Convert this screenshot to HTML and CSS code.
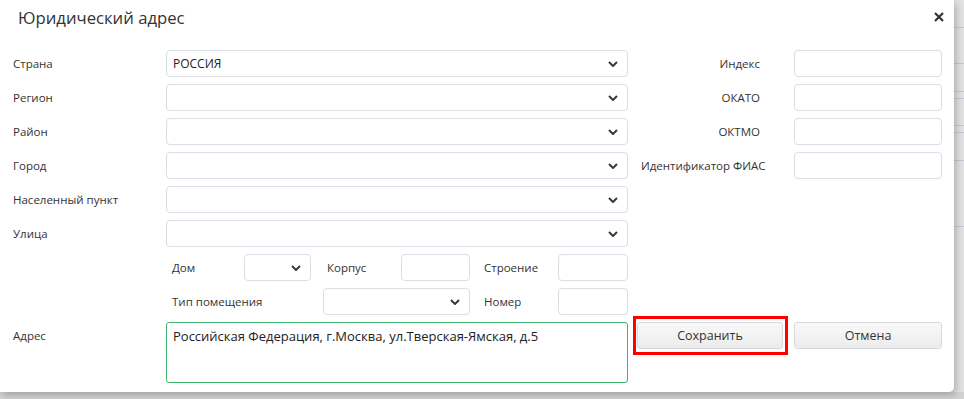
FILE: index.html
```html
<!DOCTYPE html>
<html lang="ru">
<head>
    <meta charset="UTF-8">
    <meta name="viewport" content="width=device-width, initial-scale=1.0">
    <title>Юридический адрес</title>
    <link rel="stylesheet" href="styles.css">
</head>
<body>
    <!-- Page behind the dialog -->
    <div class="backdrop">
        <div class="bg-row r1"></div>
        <div class="bg-row r2"></div>
        <div class="bg-row r3"></div>
        <div class="bg-row r4"></div>
        <div class="bg-row r5"></div>
        <div class="bg-row r6"></div>
        <div class="bg-row r7"></div>
        <div class="bg-row r8"></div>
    </div>

    <!-- Dialog -->
    <div class="modal">
        <div class="modal-header">
            <h2>Юридический адрес</h2>
            <svg class="close" viewBox="0 0 10 10"><path d="M1,1 L9,9 M9,1 L1,9"/></svg>
        </div>

        <div class="modal-body">
            <div class="left-col">
                <div class="form-row">
                    <label>Страна</label>
                    <div class="select"><span>РОССИЯ</span><svg viewBox="0 0 10 6"><polyline points="1,1 5,5 9,1"/></svg></div>
                </div>
                <div class="form-row">
                    <label>Регион</label>
                    <div class="select"><span></span><svg viewBox="0 0 10 6"><polyline points="1,1 5,5 9,1"/></svg></div>
                </div>
                <div class="form-row">
                    <label>Район</label>
                    <div class="select"><span></span><svg viewBox="0 0 10 6"><polyline points="1,1 5,5 9,1"/></svg></div>
                </div>
                <div class="form-row">
                    <label>Город</label>
                    <div class="select"><span></span><svg viewBox="0 0 10 6"><polyline points="1,1 5,5 9,1"/></svg></div>
                </div>
                <div class="form-row">
                    <label>Населенный пункт</label>
                    <div class="select"><span></span><svg viewBox="0 0 10 6"><polyline points="1,1 5,5 9,1"/></svg></div>
                </div>
                <div class="form-row">
                    <label>Улица</label>
                    <div class="select"><span></span><svg viewBox="0 0 10 6"><polyline points="1,1 5,5 9,1"/></svg></div>
                </div>

                <div class="sub-row">
                    <label class="w-dom">Дом</label>
                    <div class="select w-67"><span></span><svg viewBox="0 0 10 6"><polyline points="1,1 5,5 9,1"/></svg></div>
                    <label class="w-korpus">Корпус</label>
                    <div class="input w-69"></div>
                    <label class="w-str">Строение</label>
                    <div class="input w-70"></div>
                </div>
                <div class="sub-row">
                    <label class="w-type">Тип помещения</label>
                    <div class="select w-147"><span></span><svg viewBox="0 0 10 6"><polyline points="1,1 5,5 9,1"/></svg></div>
                    <label class="w-str">Номер</label>
                    <div class="input w-70"></div>
                </div>
            </div>

            <div class="right-col">
                <div class="form-row">
                    <label>Индекс</label>
                    <div class="input"></div>
                </div>
                <div class="form-row">
                    <label>ОКАТО</label>
                    <div class="input"></div>
                </div>
                <div class="form-row">
                    <label>ОКТМО</label>
                    <div class="input"></div>
                </div>
                <div class="form-row">
                    <label>Идентификатор ФИАС</label>
                    <div class="input"></div>
                </div>
            </div>
        </div>

        <div class="modal-footer">
            <div class="address-row">
                <label>Адрес</label>
                <div class="textarea">Российская Федерация, г.Москва, ул.Тверская-Ямская, д.5</div>
            </div>
            <div class="buttons">
                <button class="btn highlighted">Сохранить</button>
                <button class="btn">Отмена</button>
            </div>
        </div>
    </div>
</body>
</html>
```

FILE: styles.css
```css
/* Reset */
* {
    margin: 0;
    padding: 0;
    box-sizing: border-box;
}

body {
    font-family: "Open Sans", "Noto Sans", Arial, sans-serif;
    background-color: #d3d4d6;
    color: #333;
    width: 964px;
    height: 399px;
    overflow: hidden;
    position: relative;
}

/* Background page */
.backdrop {
    height: 392px;
    background-color: #e3e3e4;
    padding-top: 27px;
}

.bg-row {
    border-top: 1px solid #c7cad6;
}

.r1 { height: 36px; }
.r2 { height: 28px; }
.r3 { height: 7px; }
.r4 { height: 27px; }
.r5 { height: 7px; }
.r6 { height: 28px; }
.r7 { height: 66px; }
.r8 { height: 1px; }

/* Dialog */
.modal {
    position: absolute;
    top: 0;
    left: 0;
    width: 954px;
    height: 392px;
    background-color: #fff;
    border-radius: 0 0 5px 0;
    box-shadow: 2px 3px 8px rgba(0, 0, 0, 0.25);
    padding: 0 12px 0 13px;
}

.modal-header {
    height: 38px;
    display: flex;
    justify-content: space-between;
    align-items: center;
    padding-left: 5px;
}

.modal-header h2 {
    font-size: 16.7px;
    font-weight: 400;
    color: #333;
    margin-top: -3px;
}

.close {
    width: 10px;
    height: 10px;
    fill: none;
    stroke: #333;
    stroke-width: 2.2;
    margin-right: -2px;
    margin-top: -4px;
}

.modal-body {
    display: flex;
    margin-top: 12px;
}

.left-col {
    width: 615px;
    display: flex;
    flex-direction: column;
    gap: 7px;
}

.right-col {
    width: 305px;
    margin-left: 9px;
    display: flex;
    flex-direction: column;
    gap: 7px;
}

.form-row {
    display: flex;
    align-items: center;
    height: 27px;
}

label {
    font-size: 11.5px;
    color: #333;
    white-space: nowrap;
}

.left-col .form-row label {
    width: 153px;
}

.right-col .form-row label {
    width: 119px;
    text-align: right;
    margin-left: 4px;
    margin-right: 34px;
}

.select,
.input {
    height: 27px;
    border: 1px solid #dcdce6;
    border-radius: 4px;
    background-color: #fff;
}

.select {
    flex: 1;
    display: flex;
    align-items: center;
    justify-content: space-between;
    padding: 0 9px 0 6px;
    font-size: 12px;
    color: #222;
}

.select svg {
    width: 10px;
    height: 6px;
    fill: none;
    stroke: #3a3a3a;
    stroke-width: 2;
}

.input {
    flex: 1;
}

/* House / building rows */
.sub-row {
    display: flex;
    align-items: center;
    height: 27px;
    padding-left: 159px;
}

.sub-row .select,
.sub-row .input {
    flex: none;
}

.w-dom { width: 72px; }
.w-korpus { width: 74px; margin-left: 16px; }
.w-str { width: 74px; margin-left: 14px; }
.w-type { width: 151px; }
.w-67 { width: 67px; }
.w-69 { width: 69px; }
.w-70 { width: 70px; }
.w-147 { width: 147px; }

/* Address and buttons */
.modal-footer {
    display: flex;
    margin-top: 7px;
}

.address-row {
    width: 615px;
    display: flex;
    align-items: flex-start;
}

.address-row label {
    width: 153px;
    margin-top: 6px;
}

.textarea {
    flex: 1;
    height: 61px;
    border: 1px solid #3fb36a;
    border-radius: 3px;
    padding: 4px 6px;
    font-size: 13px;
    color: #222;
}

.buttons {
    display: flex;
    gap: 11px;
    margin-left: 9px;
}

.btn {
    height: 27px;
    font-family: "Open Sans", "Noto Sans", Arial, sans-serif;
    font-size: 12.5px;
    color: #333;
    background: linear-gradient(#f9f9f9, #ececec);
    border: 1px solid #d8d8e0;
    border-radius: 3px;
    cursor: pointer;
    width: 148px;
}

.highlighted {
    width: 146px;
    position: relative;
}

.highlighted::after {
    content: "";
    position: absolute;
    top: -7px;
    left: -5px;
    right: -6px;
    bottom: -7px;
    border: 3px solid #ff0000;
}
```
